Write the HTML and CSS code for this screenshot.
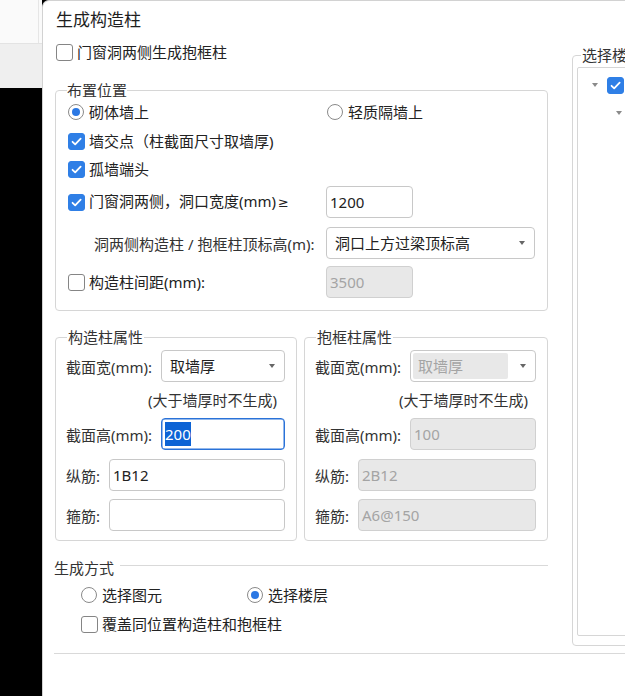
FILE: index.html
```html
<!DOCTYPE html>
<html lang="zh-CN">
<head>
<meta charset="utf-8">
<title>生成构造柱</title>
<link rel="stylesheet" href="styles.css">
</head>
<body>
<div class="screen">
  <div class="side">
    <div class="side-top"><div class="side-top-in"></div></div>
    <div class="side-mid"></div>
    <div class="side-bot"></div>
  </div>
  <div class="dialog">
    <div class="title">生成构造柱</div>
    <div class="body">
      <div class="main">
        <div class="opt top-check"><span class="cb"></span><span>门窗洞两侧生成抱框柱</span></div>

        <fieldset class="grp grp-place">
          <legend>布置位置</legend>
          <div class="prow r1">
            <div class="pleft"><div class="opt"><span class="rb on"></span><span>砌体墙上</span></div></div>
            <div class="opt opt-r2"><span class="rb"></span><span>轻质隔墙上</span></div>
          </div>
          <div class="prow r2">
            <div class="opt"><span class="cb on"><svg viewBox="0 0 17 17"><path d="M4 8.8l3 3 6.2-6.6"/></svg></span><span>墙交点（柱截面尺寸取墙厚)</span></div>
          </div>
          <div class="prow r3">
            <div class="opt"><span class="cb on"><svg viewBox="0 0 17 17"><path d="M4 8.8l3 3 6.2-6.6"/></svg></span><span>孤墙端头</span></div>
          </div>
          <div class="prow r4">
            <div class="pleft"><div class="opt"><span class="cb on"><svg viewBox="0 0 17 17"><path d="M4 8.8l3 3 6.2-6.6"/></svg></span><span>门窗洞两侧，洞口宽度(mm)<span class="ge">≥</span></span></div></div>
            <div class="inp w-short">1200</div>
          </div>
          <div class="prow r5">
            <div class="pleft"><span class="indent-label">洞两侧构造柱 / 抱框柱顶标高(m):</span></div>
            <div class="inp sel w-long"><span>洞口上方过梁顶标高</span><span class="arrow"></span></div>
          </div>
          <div class="prow r6">
            <div class="pleft"><div class="opt"><span class="cb"></span><span>构造柱间距(mm):</span></div></div>
            <div class="inp w-short dis">3500</div>
          </div>
        </fieldset>

        <div class="props">
          <fieldset class="grp grp-prop g-left">
            <legend>构造柱属性</legend>
            <div class="frow f1"><span class="flabel">截面宽(mm):</span><div class="inp sel grow"><span>取墙厚</span><span class="arrow"></span></div></div>
            <div class="note">(大于墙厚时不生成)</div>
            <div class="frow"><span class="flabel">截面高(mm):</span><div class="inp grow focus"><span class="selected">200</span></div></div>
            <div class="frow f4"><span class="flabel short">纵筋:</span><div class="inp grow">1B12</div></div>
            <div class="frow f5"><span class="flabel short">箍筋:</span><div class="inp grow"></div></div>
          </fieldset>
          <fieldset class="grp grp-prop g-right">
            <legend>抱框柱属性</legend>
            <div class="frow f1"><span class="flabel">截面宽(mm):</span><div class="inp sel grow sel-dis"><span class="sel-dis-in">取墙厚</span><span class="arrow"></span></div></div>
            <div class="note">(大于墙厚时不生成)</div>
            <div class="frow"><span class="flabel">截面高(mm):</span><div class="inp grow dis">100</div></div>
            <div class="frow f4"><span class="flabel short">纵筋:</span><div class="inp grow dis">2B12</div></div>
            <div class="frow f5"><span class="flabel short">箍筋:</span><div class="inp grow dis">A6@150</div></div>
          </fieldset>
        </div>

        <div class="mode-head"><span>生成方式</span><span class="mode-line"></span></div>
        <div class="mode-radios">
          <div class="opt mode-first"><span class="rb"></span><span>选择图元</span></div>
          <div class="opt"><span class="rb on"></span><span>选择楼层</span></div>
        </div>
        <div class="mode-check">
          <div class="opt"><span class="cb"></span><span>覆盖同位置构造柱和抱框柱</span></div>
        </div>
      </div>

      <div class="side-panel">
        <fieldset class="grp floor-grp">
          <legend>选择楼</legend>
          <div class="tree">
            <div class="trow t1"><span class="tarrow"></span><span class="cb on"><svg viewBox="0 0 17 17"><path d="M4 8.8l3 3 6.2-6.6"/></svg></span></div>
            <div class="trow t2"><span class="tarrow"></span></div>
          </div>
        </fieldset>
      </div>
    </div>
    <div class="bottom-line"></div>
  </div>
</div>
</body>
</html>
```

FILE: styles.css
```css
* { box-sizing: border-box; }
html, body { margin: 0; padding: 0; background: #000; }
body {
  font-family: "Noto Sans", "Noto Sans CJK SC", sans-serif;
  font-size: 15px;
  color: #222;
}
.screen {
  display: flex;
  width: 625px;
  height: 696px;
  overflow: hidden;
}
.side {
  width: 42px;
  flex: none;
  display: flex;
  flex-direction: column;
}
.side-top {
  height: 43px;
  background: #fafafa;
}
.side-top-in {
  width: 39px;
  height: 100%;
  border-right: 1px solid #e6e6e6;
}
.side-mid {
  height: 45px;
  background: #efefef;
  border-top: 1px solid #e3e3e3;
}
.side-bot { flex: 1; background: #000; }

.dialog {
  flex: 1;
  min-width: 0;
  background: #fff;
  border-left: 1px solid #d2d2d2;
  border-top: 1px solid #d2d2d2;
  border-top-left-radius: 7px;
  padding: 9px 0 0 11px;
  overflow: hidden;
}
.title {
  font-size: 17px;
  line-height: 20px;
  color: #1e1e1e;
  padding-left: 2px;
}
.body {
  display: flex;
  align-items: flex-start;
  height: 611px;
}
.main {
  width: 494px;
  flex: none;
}

/* option controls */
.opt {
  display: flex;
  align-items: center;
  height: 24px;
  line-height: 20px;
  white-space: nowrap;
}
.cb {
  width: 17px;
  height: 17px;
  flex: none;
  border: 1px solid #858585;
  border-radius: 3px;
  background: #fff;
  margin-right: 4px;
  display: flex;
}
.cb.on {
  background: #2f7fe6;
  border-color: #2f7fe6;
}
.cb svg {
  width: 15px;
  height: 15px;
}
.cb svg path {
  fill: none;
  stroke: #fff;
  stroke-width: 2;
  stroke-linecap: round;
  stroke-linejoin: round;
}
.rb {
  width: 16px;
  height: 16px;
  flex: none;
  border: 1px solid #8a8a8a;
  border-radius: 50%;
  background: #fff;
  margin-right: 5px;
  display: flex;
  align-items: center;
  justify-content: center;
}
.rb.on::after {
  content: "";
  width: 8px;
  height: 8px;
  border-radius: 50%;
  background: #2b78e4;
}
.ge {
  font-family: "DejaVu Sans", sans-serif;
  font-size: 13px;
  margin-left: 2px;
}

.top-check {
  margin-top: 12px;
  margin-left: 2px;
  height: 20px;
}

/* group boxes */
.grp {
  margin: 0;
  border: 1px solid #d6d6d6;
  border-radius: 4px;
  min-width: 0;
}
.grp legend {
  font-size: 15px;
  line-height: 20px;
  padding: 0 1px;
  color: #333;
}
.grp-place {
  margin-top: 18px;
  margin-left: 1px;
  width: 493px;
  padding: 0 11px 12px 12px;
}
.grp-place legend { padding: 0 0; margin-left: -1px; }
.prow {
  display: flex;
  align-items: center;
}
.pleft {
  width: 258px;
  flex: none;
}
.r1 { height: 24px; }
.r2 { height: 24px; margin-top: 5px; }
.r3 { height: 24px; margin-top: 4px; }
.r4 { height: 32px; margin-top: 5px; }
.r5 { height: 32px; margin-top: 9px; }
.r6 { height: 32px; margin-top: 7px; }
.r4 .inp, .r5 .inp, .r6 .inp { height: 32px; line-height: 30px; }
.opt-r2 { margin-left: 1px; }
.indent-label {
  display: block;
  padding-left: 26px;
  color: #333;
  white-space: nowrap;
}

/* inputs */
.inp {
  height: 32px;
  border: 1px solid #c8c8c8;
  border-radius: 4px;
  background: #fff;
  line-height: 30px;
  padding: 0 3px;
  color: #222;
  white-space: nowrap;
  overflow: hidden;
}
.w-short { width: 87px; }
.w-long { width: 209px; }
.grow { flex: 1; min-width: 0; }
.sel {
  display: flex;
  align-items: center;
  justify-content: space-between;
  padding: 0 8px 0 8px;
}
.arrow {
  width: 0;
  height: 0;
  border-left: 3px solid transparent;
  border-right: 3px solid transparent;
  border-top: 4px solid #666;
  margin-right: 1px;
}
.inp.dis {
  background: #e8e8e8;
  border-color: #d0d0d0;
  color: #a4a4a4;
}
.inp.focus {
  border-color: #2a72d8;
  box-shadow: inset 0 0 0 0.5px #2a72d8;
}
.selected {
  background: #0c63d5;
  color: #fff;
  padding: 2px 0;
  line-height: 20px;
}
.sel-dis {
  padding: 2px 8px 2px 2px;
}
.sel-dis-in {
  flex: 1;
  align-self: stretch;
  background: #e8e8e8;
  color: #a4a4a4;
  border-radius: 2px;
  margin-right: 12px;
  line-height: 26px;
  padding-left: 5px;
}

/* property groups */
.props {
  display: flex;
  gap: 7px;
  margin-top: 16px;
  margin-left: 1px;
}
.grp-prop {
  padding: 0 11px 9px 10px;
}
.g-left { width: 242px; }
.g-right { width: 244px; }
.grp-prop legend { margin-left: 1px; }
.frow {
  display: flex;
  align-items: center;
  height: 32px;
}
.f1 { margin-top: 3px; }
.f4 { margin-top: 9px; }
.f5 { margin-top: 8px; }
.flabel {
  width: 95px;
  flex: none;
  color: #333;
  white-space: nowrap;
}
.flabel.short { width: 43px; }
.note {
  height: 36px;
  line-height: 36px;
  text-align: right;
  padding-right: 8px;
  color: #333;
  white-space: nowrap;
}

/* mode */
.mode-head {
  display: flex;
  align-items: center;
  height: 20px;
  margin-top: 16px;
  color: #333;
}
.mode-line {
  flex: 1;
  height: 1px;
  background: #d9d9d9;
  margin-left: 6px;
  margin-bottom: 3px;
}
.mode-radios {
  display: flex;
  margin-top: 6px;
  padding-left: 27px;
}
.mode-first { width: 166px; }
.mode-check {
  margin-top: 5px;
  padding-left: 27px;
}

/* right panel */
.side-panel {
  margin-left: 24px;
  margin-top: 15px;
  width: 220px;
  flex: none;
}
.floor-grp {
  height: 601px;
  padding: 0 4px 8px 4px;
}
.floor-grp legend { margin-left: 4px; }
.tree {
  margin-top: 2px;
  height: 569px;
  border: 1px solid #d6d6d6;
  border-radius: 2px;
  padding-top: 7px;
}
.trow {
  display: flex;
  align-items: center;
  height: 20px;
  white-space: nowrap;
}
.t1 { padding-left: 14px; }
.t2 { padding-left: 38px; margin-top: 8px; }
.tarrow {
  width: 0;
  height: 0;
  border-left: 3.5px solid transparent;
  border-right: 3.5px solid transparent;
  border-top: 4px solid #8a8a8a;
  margin-right: 9px;
}

.bottom-line {
  height: 1px;
  background: #d9d9d9;
  margin-top: 12px;
}
```
